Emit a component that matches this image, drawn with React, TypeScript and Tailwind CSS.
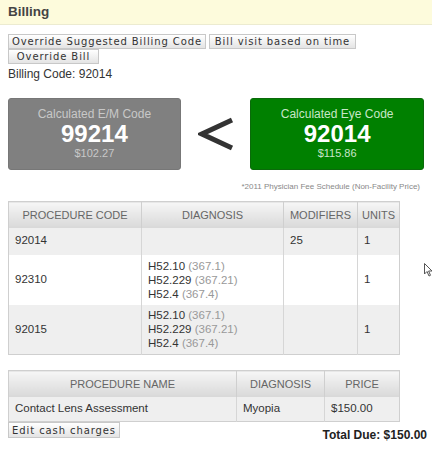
import React from "react";

const btn = "h-[15px] px-0 whitespace-nowrap overflow-hidden text-[10px] leading-[13px] tracking-[0.9px] text-[#333] bg-gradient-to-b from-white to-[#e4e4e4] border border-[#c8c8c8]";
const th = "h-[26px] p-0 font-normal text-[11px] text-[#666] bg-gradient-to-b from-[#f6f6f6] to-[#d8d8d8] border-r border-[#cfcfcf] last:border-r-0";
const td = "px-[6px] py-0 border-r border-[#d6d6d6] last:border-r-0 align-middle text-[11.5px] text-[#333]";

function Diag() {
  return (
    <div className="leading-[14px]">
      <div>H52.10 <span className="text-[#999]">(367.1)</span></div>
      <div>H52.229 <span className="text-[#999]">(367.21)</span></div>
      <div>H52.4 <span className="text-[#999]">(367.4)</span></div>
    </div>
  );
}

export default function App() {
  return (
    <div className="w-[432px] h-[450px] bg-white overflow-hidden relative" style={{ fontFamily: "Arial, 'Liberation Sans', sans-serif" }}>
      <div className="h-[25px] bg-[#fdfbdc] border-b border-[#ecebd0] flex items-center px-[8px]">
        <span className="font-bold text-[13.5px] text-[#444]">Billing</span>
      </div>
      <div className="px-[8px] pt-[9px]">
        <div className="flex gap-[3px]" style={{ fontFamily: "'DejaVu Sans', sans-serif" }}>
          <button className={btn + " w-[198px]"}>Override Suggested Billing Code</button>
          <button className={btn + " w-[147px]"}>Bill visit based on time</button>
        </div>
        <div className="flex" style={{ fontFamily: "'DejaVu Sans', sans-serif" }}>
          <button className={btn + " w-[91px]"}>Override Bill</button>
        </div>
        <div className="text-[12px] text-[#333] mt-[3px] leading-[14px]">Billing Code: 92014</div>
        <div className="flex items-center mt-[17px]">
          <div className="w-[174px] h-[72px] bg-[#808080] rounded-[3px] border border-[#777] flex flex-col items-center pt-[8px]">
            <div className="text-[12px] text-[#c8c8c8] leading-[14px]">Calculated E/M Code</div>
            <div className="text-[24px] font-bold text-white leading-[26px]">99214</div>
            <div className="text-[11px] text-[#c8c8c8] leading-[13px]">$102.27</div>
          </div>
          <div className="w-[70px] flex justify-center">
            <svg width="36" height="34" viewBox="0 0 36 34"><path d="M34 3 L4 17 L34 31" stroke="#333" strokeWidth="5" fill="none" /></svg>
          </div>
          <div className="w-[175px] h-[72px] bg-[#008000] rounded-[3px] border border-[#0a6a0a] flex flex-col items-center pt-[8px]">
            <div className="text-[12px] text-[#c8e6c8] leading-[14px]">Calculated Eye Code</div>
            <div className="text-[24px] font-bold text-white leading-[26px]">92014</div>
            <div className="text-[11px] text-[#c8e6c8] leading-[13px]">$115.86</div>
          </div>
        </div>
        <div className="text-right text-[8px] text-[#888] mt-[12px] pr-[4px] leading-[10px]">*2011 Physician Fee Schedule (Non-Facility Price)</div>
        <table className="mt-[9px] w-[392px] border border-[#cfcfcf] border-collapse">
          <thead>
            <tr>
              <th className={th + " w-[133px]"}>PROCEDURE CODE</th>
              <th className={th + " w-[142px]"}>DIAGNOSIS</th>
              <th className={th + " w-[74px]"}>MODIFIERS</th>
              <th className={th}>UNITS</th>
            </tr>
          </thead>
          <tbody>
            <tr className="h-[27px] bg-[#efefef]">
              <td className={td}>92014</td><td className={td}></td><td className={td}>25</td><td className={td}>1</td>
            </tr>
            <tr className="h-[50px] bg-white">
              <td className={td}>92310</td><td className={td}><Diag /></td><td className={td}></td><td className={td}>1</td>
            </tr>
            <tr className="h-[50px] bg-[#efefef]">
              <td className={td}>92015</td><td className={td}><Diag /></td><td className={td}></td><td className={td}>1</td>
            </tr>
          </tbody>
        </table>
        <table className="mt-[15px] w-[392px] border border-[#cfcfcf] border-collapse">
          <thead>
            <tr>
              <th className={th + " w-[228px]"}>PROCEDURE NAME</th>
              <th className={th + " w-[88px]"}>DIAGNOSIS</th>
              <th className={th}>PRICE</th>
            </tr>
          </thead>
          <tbody>
            <tr className="h-[25px] bg-[#efefef]">
              <td className={td}>Contact Lens Assessment</td><td className={td}>Myopia</td><td className={td}>$150.00</td>
            </tr>
          </tbody>
        </table>
        <div className="flex justify-between items-start">
          <button className={btn + " w-[112px] h-[16px]"} style={{ fontFamily: "'DejaVu Sans', sans-serif" }}>Edit cash charges</button>
          <div className="font-bold text-[12px] leading-[14px] text-[#222] mt-[6px] mr-[-3px]">Total Due: $150.00</div>
        </div>
      </div>
      <svg className="absolute left-[424px] top-[263px]" width="8" height="14" viewBox="0 0 8 14"><path d="M0.5 0.5 L0.5 11 L3 8.5 L5 13 L6.5 12.3 L4.6 8 L8 8 Z" fill="white" stroke="#555" strokeWidth="1" /></svg>
    </div>
  );
}
